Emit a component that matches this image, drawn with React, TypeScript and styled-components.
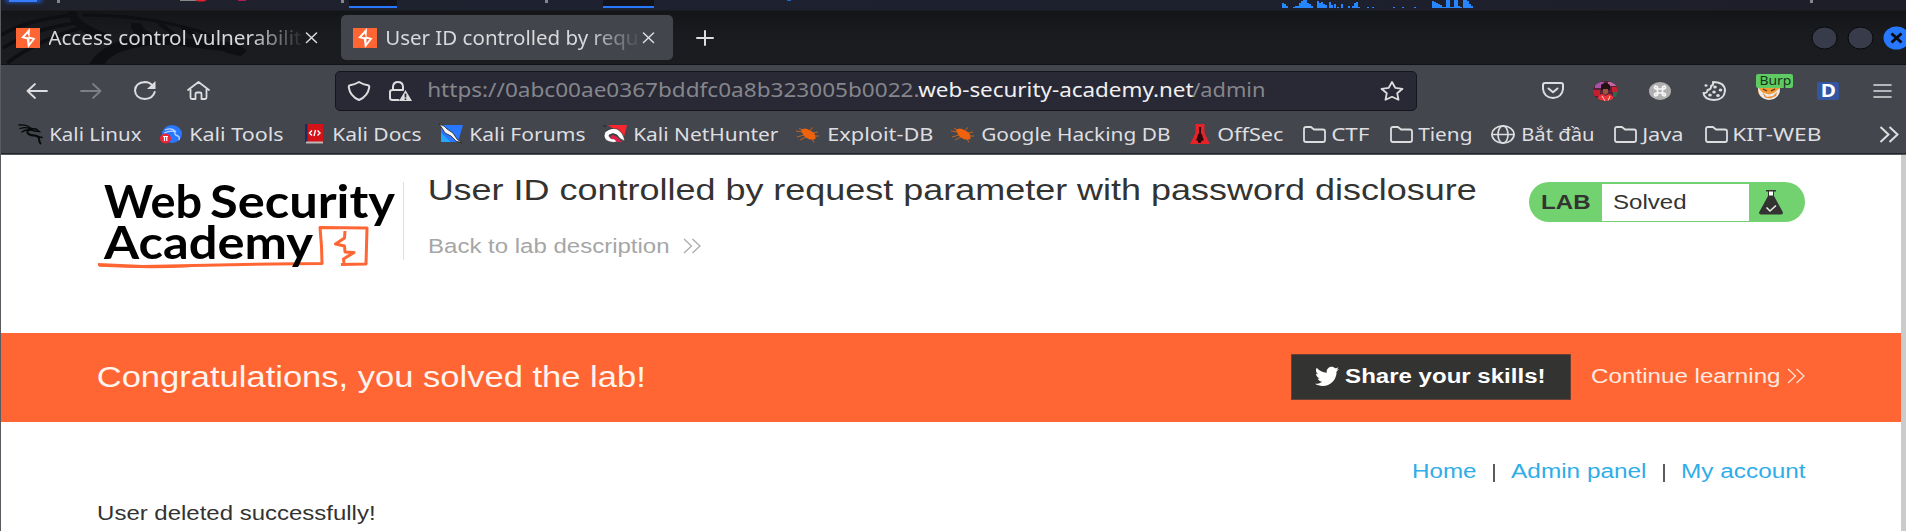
import React, { useLayoutEffect, useRef, useState } from "react";
import styled, { createGlobalStyle, css } from "styled-components";
import { FaTwitter } from "react-icons/fa";

const ui = `"Noto Sans", sans-serif`;
const web = `"Liberation Sans", Arial, sans-serif`;
const brand = `Lato, sans-serif`;

const Global = createGlobalStyle`
  * { box-sizing: border-box; }
  body { margin: 0; background: #fff; overflow: hidden; }
`;

/* ---------- text fitted to a given width ---------- */
const FitBox = styled.span<{ $w: number; $size: number; $lh?: number; $font?: string; $weight?: number; $color?: string; $fade?: boolean }>`
  display: block;
  flex: none;
  width: ${(p) => p.$w}px;
  height: ${(p) => p.$lh ?? 28}px;
  line-height: ${(p) => p.$lh ?? 28}px;
  font-family: ${(p) => p.$font ?? ui};
  font-size: ${(p) => p.$size}px;
  font-weight: ${(p) => p.$weight ?? 400};
  color: ${(p) => p.$color ?? "inherit"};
  text-align: left;
  white-space: nowrap;
  ${(p) =>
    p.$fade &&
    css`
      mask-image: linear-gradient(to right, #000 80%, rgba(0, 0, 0, 0.08) 100%);
    `}
`;
const FitInner = styled.span`
  display: inline-block;
  white-space: pre;
  transform-origin: 0 50%;
`;

type FitProps = { w: number; size: number; lh?: number; font?: string; weight?: number; color?: string; fade?: boolean; inset?: number; children: string };
function Fit({ w, size, lh, font, weight, color, fade, inset = 0.045, children }: FitProps) {
  const ref = useRef<HTMLSpanElement>(null);
  const [k, setK] = useState(1);
  const bearing = size * inset;
  useLayoutEffect(() => {
    const el = ref.current;
    if (el) setK((w + bearing * 1.6) / parseFloat(getComputedStyle(el).width));
  }, [w, bearing]);
  return (
    <FitBox $w={w} $size={size} $lh={lh} $font={font} $weight={weight} $color={color} $fade={fade}>
      <FitInner ref={ref} style={{ transform: `translateX(${-bearing}px) scaleX(${k})` }}>
        {children}
      </FitInner>
    </FitBox>
  );
}

/* ---------- browser chrome ---------- */
const Screen = styled.div`
  width: 1906px;
  height: 531px;
  display: flex;
  flex-direction: column;
  overflow: hidden;
  background: #fff;
  border-left: 1px solid #5a5b60;
`;
const DesktopPanel = styled.div`
  flex: none;
  height: 11px;
  background: linear-gradient(to right, #20212b, #1d2130 35%, #1d212e 60%, #1e1e29);
  svg { display: block; }
`;
const TabBar = styled.div`
  flex: none;
  position: relative;
  height: 54px;
  display: flex;
  align-items: center;
  background: linear-gradient(#141518, #1a1b1f 45%, #1b1c20);
  border-bottom: 1px solid #121316;
  color: #d8d8da;
`;
const Dragon = styled.svg`
  position: absolute;
  left: 0;
  top: 0;
`;
const Tab = styled.div<{ $w: number; $active?: boolean }>`
  position: relative;
  flex: none;
  display: flex;
  align-items: center;
  width: ${(p) => p.$w}px;
  height: 45px;
  padding-left: ${(p) => (p.$active ? 12 : 15)}px;
  gap: 9px;
  border-radius: 5px;
  background: ${(p) => (p.$active ? "#43454c" : "transparent")};
  svg { flex: none; }
`;
const TabClose = styled.svg`
  margin-left: -5px;
`;
const NewTab = styled.svg`
  margin-left: 23px;
`;
const WindowButtons = styled.div`
  flex: none;
  margin-left: auto;
  display: flex;
  margin-right: -4px;
  gap: 9px;
`;
const NavBar = styled.div`
  flex: none;
  height: 51px;
  display: flex;
  align-items: center;
  background: #43464c;
`;
const Slot = styled.span<{ $w: number; $ml?: number }>`
  position: relative;
  flex: none;
  display: flex;
  width: ${(p) => p.$w}px;
  margin-left: ${(p) => p.$ml ?? 0}px;
  svg { flex: none; overflow: visible; }
`;
const UrlBar = styled.div`
  flex: none;
  display: flex;
  align-items: center;
  width: 1082px;
  height: 40px;
  margin-left: 125px;
  padding-left: 12px;
  background: #282934;
  border: 1px solid #15161b;
  border-radius: 5px;
`;
const UrlText = styled.div`
  display: flex;
  margin: -1px 0 0 16px;
`;
const BurpBadge = styled.span`
  position: absolute;
  left: -1px;
  top: -7px;
  width: 37px;
  height: 14px;
  padding-left: 4px;
  border-radius: 2px;
  background: #5fcb62;
`;
const LetterBadge = styled.span`
  display: flex;
  align-items: center;
  justify-content: center;
  width: 22px;
  height: 18px;
  border-radius: 2px;
  background: #34559f;
`;
const BookmarkBar = styled.div`
  flex: none;
  height: 39px;
  display: flex;
  align-items: center;
  padding-bottom: 2px;
  background: #43464c;
  border-bottom: 1px solid #55575c;
  box-shadow: inset 0 -1px 0 #24262b;
  color: #dedee0;
`;
const Bookmark = styled.div<{ $before: number; $gap: number }>`
  flex: none;
  display: flex;
  align-items: center;
  margin-left: ${(p) => p.$before}px;
  gap: ${(p) => p.$gap}px;
`;

/* ---------- web page ---------- */
const Page = styled.main`
  flex: 1;
  min-height: 0;
  padding-left: 97px;
  border-right: 5px solid #cbcbcb;
  color: #333332;
`;
const LabHeader = styled.header`
  display: flex;
  height: 178px;
`;
const Logo = styled.div`
  position: relative;
  flex: none;
  width: 306px;
  height: 106px;
  padding: 25px 0 0 6px;
  color: #000;
`;
const LogoMark = styled.svg`
  position: absolute;
  left: 0;
  top: 65px;
`;
const LogoLine = styled.div`
  position: relative;
  display: flex;
  z-index: 1;
  gap: 8px;
  height: 41px;
`;
const Divider = styled.div`
  flex: none;
  width: 1px;
  height: 78px;
  margin: 27px 25px 0 -1px;
  background: #dedede;
`;
const Titles = styled.div`
  flex: none;
  width: 1100px;
  padding-top: 15px;
`;
const BackLink = styled.a`
  display: flex;
  align-items: center;
  gap: 14px;
  margin-top: 26px;
`;
const LabStatus = styled.div`
  flex: none;
  display: flex;
  align-items: center;
  width: 276px;
  height: 40px;
  margin-top: 27px;
  padding-left: 13px;
  border-radius: 20px;
  background: #72d26f;
`;
const StatusValue = styled.div`
  flex: none;
  display: flex;
  align-items: center;
  width: 147px;
  height: 37px;
  margin: 0 10px 0 12px;
  padding-left: 12px;
  background: #fff;
`;
const Banner = styled.section`
  display: flex;
  align-items: center;
  height: 89px;
  margin-left: -97px;
  padding: 0 96px 2px 97px;
  background: #ff6633;
`;
const ShareButton = styled.button`
  flex: none;
  display: flex;
  align-items: center;
  width: 280px;
  height: 46px;
  margin: 0 21px 0 auto;
  padding: 0 0 2px 23px;
  gap: 7px;
  border: 1px solid #6a4036;
  background: #333332;
  svg { flex: none; width: 24px; height: 23px; margin-top: 4px; }
`;
const Continue = styled.a`
  flex: none;
  display: flex;
  align-items: center;
  gap: 7px;
  padding-bottom: 1px;
`;
const Links = styled.nav`
  display: flex;
  justify-content: flex-end;
  align-items: center;
  gap: 17px;
  height: 28px;
  margin-top: 35px;
  padding-right: 96px;
  color: #2fade8;
`;
const Bar = styled.i`
  width: 2px;
  height: 18px;
  margin: 4px 0 0;
  background: #5a5a60;
`;
const Message = styled.p`
  margin: 14px 0 0;
`;

const line = { fill: "none", stroke: "#dddde0", strokeWidth: 2, strokeLinecap: "round" as const, strokeLinejoin: "round" as const };

const PortIcon = () => (
  <svg width="24" height="20" viewBox="0 0 24 20">
    <path d="M0 0h24v20H0z" fill="#ff6633" />
    <path d="M12.500 0v5.200L17.500 10.500 12 20v-6.500L6.500 12l-.5-1.500z" fill="none" />
    <path d="M14 0 5 9.800l5.800 1.400L12 20l7.500-9.800-6-1.400z" fill="#fff" />
    <path d="m11.500 5.500-3 3.500 4.500.2zM13.500 10.800l3 .4-3 3.800z" fill="#ff6633" />
  </svg>
);
const CloseIcon = () => <path d="m1.500 1 10 9.500M11.500 1l-10 9.500" {...line} strokeWidth={1.5} />;
const Folder = () => (
  <svg width="23" height="17" viewBox="0 0 23 17">
    <path d="M1 14V3q0-2 2-2h5l3 2.500h9q2 0 2 2V14q0 2-2 2H3q-2 0-2-2z" {...line} strokeWidth={1.8} />
  </svg>
);
const Spider = () => (
  <svg width="24" height="18" viewBox="0 0 24 18">
    <g stroke="#c9661f" strokeWidth=".9" fill="none">
      <path d="M7 5 3 3.500M7 7 0 6M8 10l-7 2M10 12l-6 3M14 5l3-2.500M17 8l5-1M18 11h5M16 14l2 3.500" />
    </g>
    <path d="M5 5q3-2.500 6-1 5 1.500 7.500 4.500 1.500 3 1 5.500-4 1-7 0-4-1.500-5.500-4.500z" fill="#ee620d" />
  </svg>
);
const Chevrons = ({ w = 18, h = 16, color = "#aaa", sw = 1.3 }) => (
  <svg width={w} height={h} viewBox="0 0 18 16">
    <path d="m1 1 7.500 7L1 15M9.500 1 17 8l-7.500 7" fill="none" stroke={color} strokeWidth={sw} />
  </svg>
);
const KaliLinux = () => (
  <svg width="25" height="20" viewBox="0 0 25 20" fill="none" stroke="#08090a" strokeLinecap="round">
    <path d="M1 1q8-1 12 3.500M2 4.500q6-2 10 .5M4 8q4-3 8-1.500" strokeWidth="1.300" />
    <path d="M12 5q-4 2-2 4.500 2 2 7 2 4 1 4 3 0 3 1.500 5" strokeWidth="2" />
    <path d="m13 4.500 5 .5 3 2.500-4-.5-4-1M18 12l6 1.500" strokeWidth="1.500" />
  </svg>
);
const KaliTools = () => (
  <svg width="22" height="19" viewBox="0 0 22 19">
    <ellipse cx="12" cy="9" rx="10" ry="9" fill="#2777ff" />
    <path d="M5 5q7-3 11 2M4 8q7-3 11-1-1 3 3 4 2 1 1 4" fill="none" stroke="#b9d4ff" strokeWidth="1.300" />
    <ellipse cx="5.500" cy="13.500" rx="5.500" ry="5" fill="#ee2436" />
    <path d="M3 11.500h5M4.500 11.500v4.500M6.800 11.500v4.500" stroke="#fff" strokeWidth="1.200" />
  </svg>
);
const KaliDocs = () => (
  <svg width="20" height="20" viewBox="0 0 20 20">
    <path d="M1 0h18v18H1z" fill="#d31318" />
    <path d="M1 0h2.500v18H1z" fill="#1c2b62" />
    <path d="M2 17.500h17v2H2z" fill="#bfb6b8" />
    <path d="m8 6.500-2.500 2.500L8 11.500M13.500 6.500 16 9l-2.500 2.500M11.500 6 10 12" fill="none" stroke="#fff" strokeWidth="1.400" />
  </svg>
);
const KaliForums = () => (
  <svg width="25" height="20" viewBox="0 0 25 20">
    <path d="M2 1h22l-5 17H2z" fill="#2777ff" />
    <path d="M2 9 12 18H2z" fill="#25a5ff" />
    <path d="m0 0 5 2 3 3 6 4 4 6 5 4-6-2-5-5-6-3-3-5z" fill="#f3f3f3" stroke="#222" strokeWidth=".8" />
  </svg>
);
const NetHunter = () => (
  <svg width="24" height="20" viewBox="0 0 24 20">
    <path d="M5 1h19l-3 12z" fill="#f7262f" />
    <path d="M2 8q6-5 12-3 6 3 8 12-5-1-8-6-4-3-8 0 0 4 6 4l4 2-5 1.500Q2 18 1 12z" fill="#fff" stroke="#222" strokeWidth=".6" />
    <path d="m10 11 4 2 5 5h-5l-3-3H8q-2-3 2-4z" fill="#df1f48" />
    <path d="m0 1 3 1-1 1z" fill="#111" />
  </svg>
);
const OffSec = () => (
  <svg width="20" height="20" viewBox="0 0 20 20">
    <path d="M5.500 0h9v9l5.500 11H0L5.500 9z" fill="#e4232b" />
    <path d="M9 3h2v6.500q2 1 1.600 3.500l1.400 3-2.400 1-1 2H8.500l-.8-2L6 16l1.500-3Q7 10.500 9 9.500z" fill="#2a080b" />
  </svg>
);
const Globe = () => (
  <svg width="24" height="19" viewBox="0 0 24 19" {...line} strokeWidth={1.7}>
    <ellipse cx="12" cy="9.500" rx="11" ry="8.700" />
    <ellipse cx="12" cy="9.500" rx="5" ry="8.700" />
    <path d="M1 9.500h22" />
  </svg>
);

const bookmarks: { label: string; w: number; icon: React.ReactElement; iw: number; before: number; gap: number }[] = [
  { label: "Kali Linux", w: 91, icon: <KaliLinux />, iw: 25, before: 17, gap: 7 },
  { label: "Kali Tools", w: 93, icon: <KaliTools />, iw: 22, before: 19, gap: 8 },
  { label: "Kali Docs", w: 88, icon: <KaliDocs />, iw: 20, before: 21, gap: 9 },
  { label: "Kali Forums", w: 115, icon: <KaliForums />, iw: 25, before: 18, gap: 6 },
  { label: "Kali NetHunter", w: 144, icon: <NetHunter />, iw: 24, before: 18, gap: 7 },
  { label: "Exploit-DB", w: 105, icon: <Spider />, iw: 24, before: 18, gap: 8 },
  { label: "Google Hacking DB", w: 188, icon: <Spider />, iw: 24, before: 18, gap: 7 },
  { label: "OffSec", w: 65, icon: <OffSec />, iw: 20, before: 20, gap: 8 },
  { label: "CTF", w: 37, icon: <Folder />, iw: 23, before: 20, gap: 6 },
  { label: "Tieng", w: 53, icon: <Folder />, iw: 23, before: 21, gap: 6 },
  { label: "Bắt đầu", w: 72, icon: <Globe />, iw: 24, before: 19, gap: 7 },
  { label: "Java", w: 40, icon: <Folder />, iw: 23, before: 20, gap: 6 },
  { label: "KIT-WEB", w: 88, icon: <Folder />, iw: 23, before: 22, gap: 5 },
];

/* x, height pairs of the load graph in the desktop panel */
const load: [number, number][] = [
  [1282, 5], [1284, 4], [1286, 2], [1293, 1], [1295, 2], [1297, 2], [1299, 5], [1301, 7], [1303, 8], [1305, 8], [1307, 5], [1309, 4], [1311, 2],
  [1317, 7], [1319, 5], [1321, 6], [1323, 4], [1325, 3], [1329, 6], [1331, 3], [1334, 4], [1337, 1], [1341, 4], [1348, 2], [1352, 2], [1354, 5],
  [1356, 6], [1358, 1], [1367, 1], [1372, 1], [1393, 1], [1402, 1], [1414, 1],
  [1432, 7], [1434, 6], [1436, 5], [1438, 4], [1440, 3], [1442, 1], [1444, 1], [1446, 8], [1448, 8], [1450, 1], [1452, 1], [1454, 8], [1456, 8],
  [1458, 2], [1460, 1], [1463, 8], [1465, 8], [1467, 7], [1469, 4], [1471, 2],
];

export default function App() {
  return (
    <Screen>
      <Global />
      <DesktopPanel>
        <svg width="1905" height="11" viewBox="1 0 1905 11">
          <defs>
            <filter id="glow" x="-20%" y="-200%" width="140%" height="500%"><feGaussianBlur stdDeviation="2" /></filter>
          </defs>
          <path d="M6-2h36v4H6z" fill="#1f62e8" filter="url(#glow)" />
          <path d="M9-1h28v3H9z" fill="#367dff" />
          <path d="M57 0h3v3h-3zM341 0h3v3h-3zM545 0h3v3h-3zM1810 0h3v3h-3z" fill="#85868c" />
          <path d="M180 0h17v1h-17z" fill="#888" />
          <path d="M195 0h12l-3 1.500h-6z" fill="#e61e2a" />
          <path d="M238 0h8v1h-8z" fill="#b51a55" />
          <path d="M349 0h48v6h-48zM603 0h51v6h-51z" fill="#13141b" />
          <path d="M349 6h48v2h-48zM603 6h51v2h-51z" fill="#2777ff" />
          <path d="M787 0h4v1h-4z" fill="#2661c9" />
          {load.map(([x, h]) => (
            <rect key={x} x={x} y={8 - h} width="2" height={h} fill="#2586ff" />
          ))}
          <path d="M0 10h1906v1H0z" fill="#1b1c20" />
        </svg>
      </DesktopPanel>

      <TabBar>
        <Dragon width="260" height="53" viewBox="0 0 260 53" fill="none" stroke="#0e0f12">
          <path d="M0 24Q28 8 72 4M2 37Q32 18 74 12M6 52Q35 30 79 17" strokeWidth="3.500" />
          <path d="M70 0q4 16 34 26" strokeWidth="8" />
          <path d="M82 4q60 0 108 14 18 4 22 12" strokeWidth="3" />
          <path d="M140 12q2 8 16 12 32 4 60 6 20 0 30 10l-6 5-14-3-4-2-42-5q-26-3-36 0-34 5-40 18h-16q14-22 50-28-9-5-8-13z" fill="#0e0f12" strokeWidth="0" />
          <path d="m158 12 16 12M180 15l14 10" strokeWidth="4" />
        </Dragon>
        <Tab $w={340}>
          <PortIcon />
          <Fit w={252} size={19} fade>Access control vulnerabilit</Fit>
          <TabClose width="13" height="12"><CloseIcon /></TabClose>
        </Tab>
        <Tab $w={332} $active>
          <PortIcon />
          <Fit w={252} size={19} fade>User ID controlled by requ</Fit>
          <TabClose width="13" height="12"><CloseIcon /></TabClose>
        </Tab>
        <NewTab width="18" height="16" viewBox="0 0 18 16"><path d="M9 1v14M1 8h16" {...line} /></NewTab>
        <WindowButtons>
          <svg width="27" height="24"><ellipse cx="13.500" cy="12" rx="12.500" ry="11" fill="#383c4a" stroke="#08090b" /></svg>
          <svg width="27" height="24"><ellipse cx="13.500" cy="12" rx="12.500" ry="11" fill="#383c4a" stroke="#08090b" /></svg>
          <svg width="27" height="24"><ellipse cx="13.500" cy="12" rx="13" ry="11.500" fill="#2777ff" /><path d="m8.500 7.500 10 9M18.500 7.500l-10 9" stroke="#0a0c12" strokeWidth="3" /></svg>
        </WindowButtons>
      </TabBar>

      <NavBar>
        <Slot $w={22} $ml={25}><svg width="22" height="16" viewBox="0 0 22 16"><path d="M21 8H1.500M9 1 1.500 8 9 15" {...line} strokeWidth={1.8} /></svg></Slot>
        <Slot $w={22} $ml={32}><svg width="22" height="16" viewBox="0 0 22 16"><path d="M1 8h19.500M13 1l7.500 7-7.500 7" {...line} stroke="#7d7f84" strokeWidth={1.8} /></svg></Slot>
        <Slot $w={22} $ml={32}>
          <svg width="22" height="19" viewBox="0 0 22 19"><path d="M18.500 4.500Q15.500 1 11 1 1.500 1.500 1 9.500 1.500 17.500 11 18q8-.5 9.700-7" {...line} /><path d="M21.500 0v8h-8.500z" fill="#dddde0" /></svg>
        </Slot>
        <Slot $w={23} $ml={31}>
          <svg width="23" height="19" viewBox="0 0 23 19"><path d="M1 9 11.500 1 22 9M3.500 8v8.500q0 1.500 1.500 1.500h3.500v-5q0-1.500 1.500-1.500h3q1.500 0 1.500 1.500v5H18q1.500 0 1.500-1.500V8" {...line} strokeWidth={1.8} /></svg>
        </Slot>
        <UrlBar>
          <Slot $w={22}><svg width="22" height="20" viewBox="0 0 22 20"><path d="M11 1q4 2.500 9 3.300 1.500.2 1.200 2Q20 15 11 19 2 15 .8 6.300.5 4.500 2 4.300 7 3.500 11 1z" {...line} /></svg></Slot>
          <Slot $w={23} $ml={19}>
            <svg width="23" height="20" viewBox="0 0 23 20"><path d="M4 9V5.500Q4.500 1 9 1t5 4.500V9M9.500 19h-6Q1 19 1 17v-6q0-2 2.500-2h10.500" {...line} /><path d="M16.500 9 23 20H10z" fill="#dddde0" /><path d="M16.500 12.500v4M16.500 17.500v1.500" stroke="#282934" strokeWidth="1.700" /></svg>
          </Slot>
          <UrlText>
            <Fit w={491} size={19} color="#85868c">https://0abc00ae0367bddfc0a8b323005b0022.</Fit>
            <Fit w={274} size={19} color="#f0f0f2">web-security-academy.net</Fit>
            <Fit w={72} size={19} color="#85868c">/admin</Fit>
          </UrlText>
          <Slot $w={24} $ml={115}><svg width="24" height="20" viewBox="0 0 24 20"><path d="m12 1 3.200 5.800 7.300 1-5.300 4.500 1.300 6.500L12 15.800l-6.500 3 1.300-6.500L1.500 7.800l7.300-1z" {...line} strokeWidth={1.8} /></svg></Slot>
        </UrlBar>
        <Slot $w={22} $ml={125}>
          <svg width="22" height="17" viewBox="0 0 22 17"><path d="M3 1h16q2 0 2 2v4q-1 8.500-10 9Q2 15.500 1 7V3q0-2 2-2z" {...line} /><path d="m6.500 6.500 4.500 3.800 4.500-3.800" {...line} /></svg>
        </Slot>
        <Slot $w={25} $ml={29}>
          <svg width="25" height="20" viewBox="0 0 25 20">
            <defs><clipPath id="face"><ellipse cx="12.500" cy="10" rx="12.500" ry="10" /></clipPath></defs>
            <g clipPath="url(#face)">
              <path d="M0 0h25v20H0z" fill="#5b2137" />
              <path d="M2 1h9v6H2z" fill="#a653a8" /><path d="M15 1h8v4h-8z" fill="#c667a1" />
              <path d="M0 9h7v6H0zM19 6h6v5h-6z" fill="#c41f2f" />
              <path d="M20 11h5v5h-5z" fill="#2b6a4d" />
              <path d="M8 4q4-4 9 0v5H8z" fill="#241116" />
              <path d="M10 8h5v4l-2.500 2L10 12z" fill="#9c5640" />
              <path d="M4 20q1-7 6-7l2.500 2L16 13q5 1 5 7z" fill="#ef3138" /><path d="m9 15 3 5M17 15l-2 5" stroke="#ffd5cd" />
            </g>
          </svg>
        </Slot>
        <Slot $w={22} $ml={31}>
          <svg width="22" height="18" viewBox="0 0 22 18"><ellipse cx="11" cy="9" rx="11" ry="9" fill="#b0b0b0" /><path d="M8.500 7h5v4h-5zM8.500 7V5q-3-2-3 .5 0 1.500 3 1.500M13.500 7V5q3-2 3 .5 0 1.500-3 1.500M8.500 11v2q-3 2-3-.5 0-1.500 3-1.500M13.500 11v2q3 2 3-.5 0-1.500-3-1.500" fill="none" stroke="#f5f5f5" strokeWidth="1.700" /></svg>
        </Slot>
        <Slot $w={24} $ml={31}>
          <svg width="24" height="20" viewBox="0 0 24 20"><path d="M11 1q12 0 12 9-1 9-11 9Q2 18.500 1.500 12q4 .5 4-3 4-.5 3.500-4Q12 4 11 1z" {...line} /><g fill="#dddde0"><ellipse cx="13" cy="6" rx="1.800" ry="1.500" /><ellipse cx="18.500" cy="9" rx="1.800" ry="1.500" /><ellipse cx="12" cy="11" rx="1.800" ry="1.500" /><ellipse cx="8" cy="14" rx="1.800" ry="1.500" /><ellipse cx="16" cy="14.500" rx="1.800" ry="1.500" /><ellipse cx="4" cy="4.500" rx="1.500" ry="1.200" /></g></svg>
        </Slot>
        <Slot $w={24} $ml={31}>
          <svg width="24" height="19" viewBox="0 0 24 19"><ellipse cx="12" cy="9.500" rx="11" ry="9" fill="#f39a35" /><path d="M1 6q3 5 6 6l5 1.500L17 12l6-5q0 11-11 12Q1 18 1 6z" fill="#e9eaed" /><path d="m5 11 5 5 6-1 4-4-1 4-6 2.500-5-1z" fill="#f08a24" /><path d="m6 8 4 2M14 10l4-2" stroke="#51341e" strokeWidth="1.300" /></svg>
          <BurpBadge><Fit w={31} size={12.5} lh={14} color="#15351a">Burp</Fit></BurpBadge>
        </Slot>
        <Slot $w={22} $ml={36}>
          <LetterBadge><Fit w={13} size={17} lh={18} weight={700} color="#fff" inset={0.08}>D</Fit></LetterBadge>
        </Slot>
        <Slot $w={19} $ml={34}><svg width="19" height="14" viewBox="0 0 19 14"><path d="M1 1h17M1 7h17M1 13h17" {...line} strokeWidth={1.6} /></svg></Slot>
      </NavBar>

      <BookmarkBar>
        {bookmarks.map((b) => (
          <Bookmark key={b.label} $before={b.before} $gap={b.gap}>
            <Slot $w={b.iw}>{b.icon}</Slot>
            <Fit w={b.w} size={18.7}>{b.label}</Fit>
          </Bookmark>
        ))}
        <Slot $w={20} $ml={58}><Chevrons w={20} h={17} color="#dddde0" sw={1.9} /></Slot>
      </BookmarkBar>

      <Page>
        <LabHeader>
          <Logo>
            <LogoLine>
              <Fit w={98} size={46} lh={41} font={brand} weight={700} inset={0}>Web</Fit>
              <Fit w={185} size={46} lh={41} font={brand} weight={700} inset={0}>Security</Fit>
            </LogoLine>
            <LogoLine>
              <Fit w={209} size={46} lh={41} font={brand} weight={700} inset={0}>Academy</Fit>
            </LogoLine>
            <LogoMark width="275" height="50" viewBox="0 0 275 50" fill="none" stroke="#ff6633" strokeWidth="3" strokeLinejoin="round">
              <path d="M0 44.500 45 46.500l130-2.500 49-.5-.500-17-1.500-19 47 .5-1 36-25 .5" />
              <path d="M1 46q50 2.500 90 .5" strokeWidth="1.500" />
              <path d="m247 11-.5 7-9 6 9 2 .5 6 9 .5-10.500 6.500.5 4" />
            </LogoMark>
          </Logo>
          <Divider />
          <Titles>
            <Fit w={1047} size={30} lh={40} font={web}>User ID controlled by request parameter with password disclosure</Fit>
            <BackLink>
              <Fit w={240} size={20.5} lh={20} font={web} color="#a6a6a6">Back to lab description</Fit>
              <Chevrons />
            </BackLink>
          </Titles>
          <LabStatus>
            <Fit w={48} size={20.5} font={web} weight={700}>LAB</Fit>
            <StatusValue><Fit w={72} size={20.5} font={web}>Solved</Fit></StatusValue>
            <svg width="24" height="25" viewBox="0 0 24 25"><path d="M7 0h10v1.500h-2V6l9 16.500q0 2-2 2H2q-2 0-2-2L9 6V1.500H7z" fill="#333332" /><path d="M10 1.500h4v4h-4z" fill="#fff" /><path d="m7.500 17.500 3.500 3.500 6-5.500" fill="none" stroke="#e7efe6" strokeWidth="1.600" /></svg>
          </LabStatus>
        </LabHeader>
        <Banner>
          <Fit w={547} size={29} lh={40} font={web} color="#fff4ef">Congratulations, you solved the lab!</Fit>
          <ShareButton>
            <FaTwitter color="#fff" preserveAspectRatio="none" viewBox="0 30 512 500" />
            <Fit w={199} size={20} font={web} weight={700} color="#fff">Share your skills!</Fit>
          </ShareButton>
          <Continue>
            <Fit w={188} size={20} font={web} color="#ffeae2">Continue learning</Fit>
            <Chevrons color="#ffe0d4" />
          </Continue>
        </Banner>
        <Links>
          <Fit w={63} size={20} font={web}>Home</Fit>
          <Bar />
          <Fit w={134} size={20} font={web}>Admin panel</Fit>
          <Bar />
          <Fit w={123} size={20} font={web}>My account</Fit>
        </Links>
        <Message><Fit w={277} size={20} font={web}>User deleted successfully!</Fit></Message>
      </Page>
    </Screen>
  );
}
